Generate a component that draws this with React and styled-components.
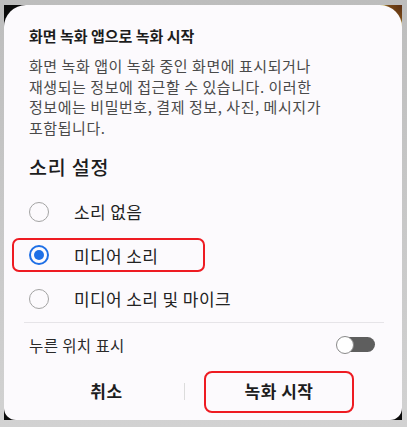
import { useState } from "react";
import styled, { createGlobalStyle } from "styled-components";

const Global = createGlobalStyle`
  html, body { margin: 0; padding: 0; }
  body {
    background: #c9c9c9;
    font-family: "Noto Sans CJK KR", "Noto Sans", sans-serif;
  }
`;

const Frame = styled.div`
  width: 407px;
  height: 427px;
  box-sizing: border-box;
  padding: 5px 5px 7px 4px;
  background: linear-gradient(#bdbdbd, #d2d2d2);
`;

const Screen = styled.div`
  height: 100%;
  background:
    radial-gradient(circle at 100% 0%, #5a2e12 0, #7a4a18 14px, #c9c25a 20px, transparent 24px),
    #0b0b0b;
`;

const Dialog = styled.div`
  height: 100%;
  box-sizing: border-box;
  background: #fcfafd;
  border-radius: 22px 22px 12px 12px;
  padding: 20px 24px 0 25px;
  display: flex;
  flex-direction: column;
`;

const Title = styled.h2`
  margin: 0;
  font-size: 15px;
  line-height: 22px;
  font-weight: 700;
  color: #1d1d1d;
`;

const Body = styled.p`
  margin: 9px 0 0;
  font-size: 15px;
  line-height: 20.5px;
  color: #4a4a4a;
  letter-spacing: 0.55px;
`;

const Section = styled.h3`
  margin: 16px 0 0;
  font-size: 19.5px;
  line-height: 26px;
  font-weight: 500;
  color: #1d1d1d;
  letter-spacing: 0.8px;
`;

const Options = styled.div`
  margin-top: 10px;
  display: flex;
  flex-direction: column;
`;

const Option = styled.label`
  position: relative;
  height: 43.5px;
  display: flex;
  align-items: center;
  gap: 25px;
  font-size: 17px;
  color: #222;
  letter-spacing: 0.4px;
  cursor: pointer;

  ${(p) =>
    p.$marked &&
    `
    &::after {
      content: "";
      position: absolute;
      left: -17px;
      top: 4px;
      width: 193px;
      height: 34px;
      box-sizing: border-box;
      border: 2.5px solid #ee1b22;
      border-radius: 7px;
      pointer-events: none;
    }
  `}
`;

const Radio = styled.span`
  width: 20px;
  height: 20px;
  flex: none;
  box-sizing: border-box;
  border-radius: 50%;
  border: ${(p) => (p.$on ? "2px solid #1e6fe6" : "1.5px solid #a3a3a3")};
  display: flex;
  align-items: center;
  justify-content: center;

  &::before {
    content: "";
    width: 10px;
    height: 10px;
    border-radius: 50%;
    background: ${(p) => (p.$on ? "#1e6fe6" : "transparent")};
  }
`;

const Divider = styled.hr`
  margin: 1px 0 0 -5px;
  width: 360px;
  border: none;
  border-top: 1px solid #e6e4e8;
`;

const ToggleRow = styled.div`
  height: 44px;
  display: flex;
  align-items: center;
  justify-content: space-between;
  font-size: 15.5px;
  color: #2a2a2a;
  letter-spacing: 0.4px;
  padding-right: 3px;
`;

const Track = styled.button`
  width: 38px;
  height: 15px;
  padding: 0;
  border: none;
  border-radius: 8px;
  background: #5e5e5e;
  display: flex;
  align-items: center;
  justify-content: ${(p) => (p.$on ? "flex-end" : "flex-start")};
  cursor: pointer;
`;

const Knob = styled.span`
  width: 18px;
  height: 18px;
  box-sizing: border-box;
  border-radius: 50%;
  background: #fff;
  border: 1.5px solid #8a8a8a;
  margin-left: -1px;
`;

const Buttons = styled.div`
  margin-top: 4px;
  display: grid;
  grid-template-columns: 155px 1px 1fr;
  align-items: center;
`;

const Sep = styled.span`
  height: 17px;
  background: #dcdcdc;
`;

const Button = styled.button`
  height: 42px;
  box-sizing: border-box;
  background: transparent;
  font-family: inherit;
  font-size: 17px;
  font-weight: 700;
  letter-spacing: 0.5px;
  color: #1d1d1d;
  border-radius: 8px;
  border: 2.5px solid ${(p) => (p.$marked ? "#ee1b22" : "transparent")};
  margin-left: ${(p) => (p.$marked ? "19px" : "0")};
  width: ${(p) => (p.$marked ? "150px" : "auto")};
  padding: 0 0 2px;
  cursor: pointer;
`;

const options = ["소리 없음", "미디어 소리", "미디어 소리 및 마이크"];

export default function App() {
  const [sound, setSound] = useState(1);
  const [touches, setTouches] = useState(false);

  return (
    <Frame>
      <Global />
      <Screen>
        <Dialog>
          <Title>화면 녹화 앱으로 녹화 시작</Title>
          <Body>
            화면 녹화 앱이 녹화 중인 화면에 표시되거나
            <br />
            재생되는 정보에 접근할 수 있습니다. 이러한
            <br />
            정보에는 비밀번호, 결제 정보, 사진, 메시지가
            <br />
            포함됩니다.
          </Body>
          <Section>소리 설정</Section>
          <Options>
            {options.map((label, i) => (
              <Option key={label} $marked={i === 1} onClick={() => setSound(i)}>
                <Radio $on={sound === i} />
                {label}
              </Option>
            ))}
          </Options>
          <Divider />
          <ToggleRow>
            누른 위치 표시
            <Track $on={touches} onClick={() => setTouches(!touches)}>
              <Knob />
            </Track>
          </ToggleRow>
          <Buttons>
            <Button>취소</Button>
            <Sep />
            <Button $marked>녹화 시작</Button>
          </Buttons>
        </Dialog>
      </Screen>
    </Frame>
  );
}
